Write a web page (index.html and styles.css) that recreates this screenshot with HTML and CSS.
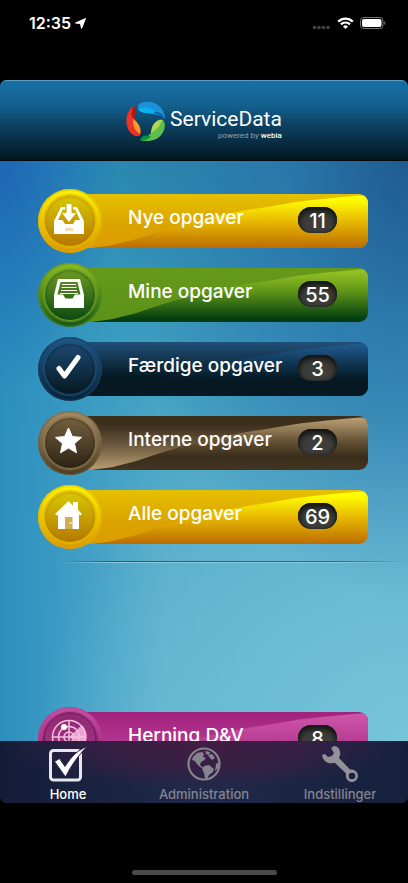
FILE: index.html
```html
<!DOCTYPE html>
<html lang="da">
<head>
<meta charset="utf-8">
<meta name="viewport" content="width=device-width, initial-scale=1">
<title>ServiceData</title>
<link rel="stylesheet" href="styles.css">
</head>
<body>
<div class="status">
  <div class="status-group">
    <span class="clock">12:35</span>
    <svg width="11" height="11" viewBox="0 0 11 11"><path d="M10.500.5 6.500 10.500 5.500 5.500.5 5z" fill="#fff" stroke="#fff" stroke-linejoin="round"/></svg>
  </div>
  <div class="status-group status-right">
    <svg width="19" height="5" viewBox="0 0 19 5" fill="#454547"><circle cx="2.500" cy="2.500" r="1.800"/><circle cx="7" cy="2.500" r="1.800"/><circle cx="11.500" cy="2.500" r="1.800"/><circle cx="16" cy="2.500" r="1.800"/></svg>
    <svg width="17" height="12" viewBox="0 0 17 12" fill="none" stroke="#fff" stroke-width="2.200"><path d="M1.200 4.600a10.300 10.300 0 0 1 14.600 0"/><path d="M3.900 7.400a6.500 6.500 0 0 1 9.200 0"/><path d="M8.500 11.900 6 9.400a3.600 3.600 0 0 1 5 0z" fill="#fff" stroke="none"/></svg>
    <svg width="26" height="12" viewBox="0 0 26 12"><rect x=".5" y=".5" width="22.500" height="11" rx="3.200" fill="none" stroke="#777"/><rect x="2" y="2" width="19.500" height="8" rx="2" fill="#fff"/><path d="M24.300 4a2.200 2.200 0 0 1 0 4z" fill="#777"/></svg>
  </div>
</div>

<div class="screen">
  <header class="header">
    <svg width="40" height="40" viewBox="0 0 40 40">
      <path d="M12 6C12 1 21-.5 28 2c6 2 11 8 11 16-7-6-12-4-17-6C17 12 12 10 12 6z" fill="#1b91d8"/>
      <path d="M12 8c5-2 12-2 17 2 2 1 1 2-2 2-5 1-13 0-15-4z" fill="#08b4ee"/>
      <path d="M27 11c6-1 10 2 12 7-4-4-8-5-12-7z" fill="#0a5fae"/>
      <path d="M8 5C2 8-1 17 1 25c2 7 7 11 12 10 2-1 2-4 1-7L7 15C8 12 10 9 8 5z" fill="#ef3226"/>
      <path d="M8 5c3 2 2 8 0 13-2-1-3-4-2-8 0-2 1-4 2-5z" fill="#b1190f"/>
      <path d="M7 18c5 3 9 9 7 15-4-2-8-8-7-15z" fill="#f8972b"/>
      <path d="M37 19c4 5 1 14-5 18-5 3-12 4-18 2 5-3 12-4 12-12 1-5 7-10 11-8z" fill="#5fbd4c"/>
      <path d="M36 19c-1 5-5 9-11 13 0-7 5-14 11-13z" fill="#b0d94f"/>
      <path d="M14 39c2-5 6-5 11-4-2 3-6 5-11 4z" fill="#079344"/>
    </svg>
    <div class="brand">
      <h1 class="brand-name">ServiceData</h1>
      <p class="brand-sub">powered by <b>webia</b></p>
    </div>
  </header>

  <main class="content">
    <nav class="tasks">
      <a class="task yellow" href="#nye">
        <span class="disc"><svg width="32" height="32" viewBox="0 0 32 32" fill="#fff"><path d="M8 4h4v2.500H9.800L5 17h4.500l2.500 4h8l2.500-4H27L22.200 6.500H20V4h4l7 14v13H1V18z"/><path d="M13.500 1h5v9H23l-7 9-7-9h4.500z"/><path d="M12 25h8v3h-8z" fill="#f2ddb0"/></svg></span>
        <span class="bar"><span class="label">Nye opgaver</span><span class="count"><span>11</span></span></span>
      </a>
      <a class="task green" href="#mine">
        <span class="disc"><svg width="32" height="32" viewBox="0 0 32 32" fill="#fff"><path fill-rule="evenodd" d="M5 2h22l4 16v13H1V18zM7.500 5 4.500 17.500H10l2.500 4h7l2.500-4h5.500L24.500 5z"/><path d="M9 7h14v1H9zM8.500 10h15v1h-15zM8 13h16v1H8zM7 16h18v1H7z"/></svg></span>
        <span class="bar"><span class="label">Mine opgaver</span><span class="count"><span>55</span></span></span>
      </a>
      <a class="task blue" href="#faerdige">
        <span class="disc"><svg width="32" height="32" viewBox="0 0 32 32"><path d="M6 17.500 11.500 25 25 6.500" fill="none" stroke="#fff" stroke-width="5" stroke-linejoin="round" stroke-linecap="round"/></svg></span>
        <span class="bar"><span class="label">Færdige opgaver</span><span class="count"><span>3</span></span></span>
      </a>
      <a class="task brown" href="#interne">
        <span class="disc"><svg width="32" height="32" viewBox="0 0 32 32"><path d="m15.500 3 3.800 8.500 9.200.9-7 6.200 2 9.200-8-4.700-8 4.700 2-9.200-7-6.200 9.200-.9z" fill="#fff" stroke="#fff" stroke-linejoin="round"/></svg></span>
        <span class="bar"><span class="label">Interne opgaver</span><span class="count"><span>2</span></span></span>
      </a>
      <a class="task yellow" href="#alle">
        <span class="disc"><svg width="32" height="32" viewBox="0 0 32 32"><path d="M15.500 2 20 6.500V3h5v8l4 4-2 1.500-1-1V30H5V15.500l-1 1L2 15z" fill="#fff"/><path d="M12 18h7.500v12H12z" fill="#d2ad4e"/><circle cx="17.500" cy="24" r="1" fill="#fff"/></svg></span>
        <span class="bar"><span class="label">Alle opgaver</span><span class="count"><span>69</span></span></span>
      </a>
    </nav>
    <hr class="divider">
    <nav class="tasks places">
      <a class="task pink" href="#herning">
        <span class="disc"><svg width="36" height="36" viewBox="0 0 36 36" fill="none" stroke="#f3bfe0" stroke-width="1.500"><path d="M18 18 31 6a17 17 0 0 1 1 22z" fill="#eaa3d0" stroke="none"/><circle cx="18" cy="18" r="16.500"/><circle cx="18" cy="18" r="10.500"/><circle cx="18" cy="18" r="5"/><path d="M18 1v34M1 18h34"/><circle cx="13" cy="8" r="3" fill="#fff" stroke="none"/></svg></span>
        <span class="bar"><span class="label">Herning D&amp;V</span><span class="count"><span>8</span></span></span>
      </a>
    </nav>
  </main>

  <nav class="tabs">
    <a class="tab active" href="#home">
      <svg width="38" height="36" viewBox="0 0 38 36"><rect x="1.500" y="4.500" width="30" height="29.500" rx="3" fill="none" stroke="#e9e6f0" stroke-width="3"/><path d="m5.500 15.500 5-3 5.500 8C22 11 28 4.500 38 .5 30 9 23 18 16.500 31z" fill="#fff" stroke="#2c2144" stroke-width="1"/></svg>
      <span>Home</span>
    </a>
    <a class="tab" href="#administration">
      <svg width="36" height="36" viewBox="0 0 36 36" fill="#87838f"><circle cx="18" cy="18" r="15.500" fill="none" stroke="#87838f" stroke-width="2.200"/><path d="m7 11 4-4 5-1 2 2-1 3 3 1-3 3-2 1-1 3 2 2 3 1-1 1-4-2-3-3-2-3-3-1z"/><path d="m19 5 5 1-1 3-3-1zM22 9l4-1 3 4-3 2-2-2zM18 20l5-1 5 4-1 3-4 3-2 4-2-1-1-5-2-4zM30 18l3-2-1 6-3 3z"/></svg>
      <span>Administration</span>
    </a>
    <a class="tab" href="#indstillinger">
      <svg width="36" height="36" viewBox="0 0 36 36"><path fill-rule="evenodd" d="M9 2 12 0c4 0 7 4 6 9l-1 3 11 11.500c4-.5 8 2 8 6.500a6.100 6.100 0 0 1-12.200 0l.2-2.500L12.500 16.500C8 19 1 16 0 9l3-1 3 3 4-1 2-3zM30 26.700a3.300 3.300 0 1 0 0 6.600 3.300 3.300 0 0 0 0-6.600z" fill="#929098"/></svg>
      <span>Indstillinger</span>
    </a>
  </nav>
</div>
<div class="home-area"><span class="home-bar"></span></div>
</body>
</html>
```
FILE: styles.css
```css
* { box-sizing: border-box; margin: 0; padding: 0; }

body {
  display: flex;
  flex-direction: column;
  height: 100vh;
  background: #000;
  color: #fff;
  font-family: Inter, "Liberation Sans", sans-serif;
}

a { color: inherit; text-decoration: none; }
svg { display: block; flex: none; }

.status {
  display: flex;
  justify-content: space-between;
  flex: none;
  height: 80px;
  padding: 12px 22px 0 29px;
}
.status-group { display: flex; align-items: center; gap: 4px; height: 22px; }
.status-right { gap: 6px; }
.status-right svg:first-child { align-self: flex-end; margin-bottom: 4px; }
.clock { font-size: 16px; font-weight: 600; }

.screen {
  display: flex;
  flex-direction: column;
  flex: 1;
  min-height: 0;
  border-radius: 6px;
  overflow: hidden;
}

.header {
  display: flex;
  justify-content: center;
  gap: 4px;
  flex: none;
  height: 81px;
  padding-top: 20px;
  background: linear-gradient(#1870a6, #14608f 30%, #0b3d5c 60%, #041720);
  border-top: 1px solid #5a9cc4;
  border-bottom: 1px solid #020a10;
}
.brand { padding-top: 5px; text-align: right; }
.brand-name { font: 400 21px/26px Roboto, sans-serif; }
.brand-sub { font: 400 8px/8px Roboto, sans-serif; color: #8fa1ad; }
.brand-sub b { font-weight: 500; color: #fff; }

.content {
  flex: 1;
  min-height: 0;
  overflow-y: auto;
  scrollbar-width: none;
  padding-top: 28px;
  background:
    radial-gradient(ellipse 75% 75% at 100% 0, #205b90, rgba(40, 115, 170, 0.8) 40%, rgba(60, 140, 185, 0)),
    radial-gradient(ellipse 30% 40% at 0 0, #1d66b4, rgba(35, 125, 185, 0)),
    radial-gradient(ellipse 90% 60% at 100% 100%, #75c4da, rgba(100, 180, 208, 0)),
    linear-gradient(90deg, #2b8fbe, rgba(80, 170, 200, 0) 40%),
    linear-gradient(#2b88ac, #3fa0c0 30%, #58adcb 65%, #60b3cf);
}

.tasks { display: grid; gap: 10px; padding: 0 40px 0 38px; }
.places { padding-top: 144px; }

.task { display: flex; align-items: center; height: 64px; font-weight: 500; }

.disc {
  display: grid;
  place-items: center;
  position: relative;
  z-index: 1;
  flex: none;
  width: 64px;
  height: 64px;
  padding: 0 2px 5px 0;
  border-radius: 50%;
  background: linear-gradient(var(--ring-top), var(--ring-bottom));
  box-shadow: inset 0 0 3px 1px var(--edge);
}
.disc::before {
  content: "";
  position: absolute;
  inset: 6px;
  border: 1px solid var(--rim);
  border-radius: 50%;
  background: linear-gradient(var(--face-top), var(--face-bottom));
  box-shadow: 0 0 2px 1px var(--rim), inset 0 0 3px var(--face-bottom);
}
.disc svg { position: relative; }

.bar {
  display: flex;
  align-items: flex-start;
  justify-content: space-between;
  position: relative;
  flex: 1;
  height: 54px;
  margin-left: -32px;
  padding: 11px 31px 0 58px;
  border-radius: 0 9px 9px 0;
  overflow: hidden;
  background: linear-gradient(var(--upper));
}
.bar::before {
  content: "";
  position: absolute;
  inset: 0;
  background: linear-gradient(var(--lower));
  clip-path: polygon(7% 100%, 14% 95%, 22% 84%, 31% 67%, 39% 54%, 49% 41%, 58% 31%, 68% 22%, 77% 14%, 87% 8%, 97% 3%, 100% 3%, 100% 100%);
}
.label { position: relative; font-size: 19px; line-height: 26px; }
.count {
  position: relative;
  width: 39px;
  height: 26px;
  margin-top: 2px;
  padding-top: 3px;
  border-radius: 13px;
  background: #3d3e3a;
  box-shadow: inset 0 4px 6px #10110f, inset 0 0 3px #1c1d1a;
  font-size: 20px;
  line-height: 22px;
  text-align: center;
}

.yellow {
  --upper: #e6c000, #dba300 60%, #dc9c00;
  --lower: #ffff00 10%, #e9bd00 48%, #bd6c00;
  --ring-top: #ffff00; --ring-bottom: #dd9300; --edge: #d9ae00;
  --rim: #e0b800; --face-top: #d8c800; --face-bottom: #b57800;
}
.green {
  --upper: #66991a, #5c921a;
  --lower: #9cc826, #659a19 40%, #013d10 95%;
  --ring-top: #9ac421; --ring-bottom: #0b4d14; --edge: #528c1c;
  --rim: #6a9f22; --face-top: #6e9b22; --face-bottom: #0b4a12;
}
.blue {
  --upper: #205078, #061923 65%;
  --lower: #235f97, #0d3049 45%, #061822 70%;
  --ring-top: #225c8c; --ring-bottom: #082032; --edge: #173f61;
  --rim: #1b4b75; --face-top: #1c496f; --face-bottom: #061822;
}
.brown {
  --upper: #3b2e1b 15%, #66533a 50%, #b0966c 95%;
  --lower: #b89d73 5%, #5f4d31 50%, #392d1b 75%, #43351f;
  --ring-top: #af946b; --ring-bottom: #46371f; --edge: #6e5a3c;
  --rim: #8a724e; --face-top: #75603f; --face-bottom: #2c2314;
}
.pink {
  --upper: #a1227d, #c0459e;
  --lower: #cf58aa, #a52682;
  --ring-top: #cb56a8; --ring-bottom: #8c196b; --edge: #b23b90;
  --rim: #74175a; --face-top: #8f2772; --face-bottom: #a83c8a;
}

.divider {
  height: 2px;
  margin: 12px 0 0 58px;
  border: 0;
  background: linear-gradient(90deg, transparent, #2a5e74 15%, #35697e 80%, transparent) 0 0 / 100% 1px no-repeat,
    linear-gradient(90deg, transparent, #8bc8dc 15%, #8bc8dc 80%, transparent) 0 1px / 100% 1px no-repeat;
}

.tabs {
  display: grid;
  grid-template-columns: repeat(3, 1fr);
  flex: none;
  height: 62px;
  padding-top: 5px;
  background:
    radial-gradient(ellipse 50% 80% at 50% 0, #431c43, rgba(60, 30, 68, 0.8) 50%, rgba(40, 32, 70, 0)),
    linear-gradient(90deg, #141c38, #1f2a4a 50%, #15203d);
}
.tab {
  display: flex;
  flex-direction: column;
  align-items: center;
  gap: 4px;
  color: #85838f;
  font-size: 13px;
  font-weight: 500;
  line-height: 16px;
}
.active { color: #fff; }

.home-area {
  display: flex;
  justify-content: center;
  align-items: flex-end;
  flex: none;
  height: 80px;
  padding-bottom: 8px;
}
.home-bar { width: 145px; height: 5px; border-radius: 3px; background: #4a4a4a; }
```
